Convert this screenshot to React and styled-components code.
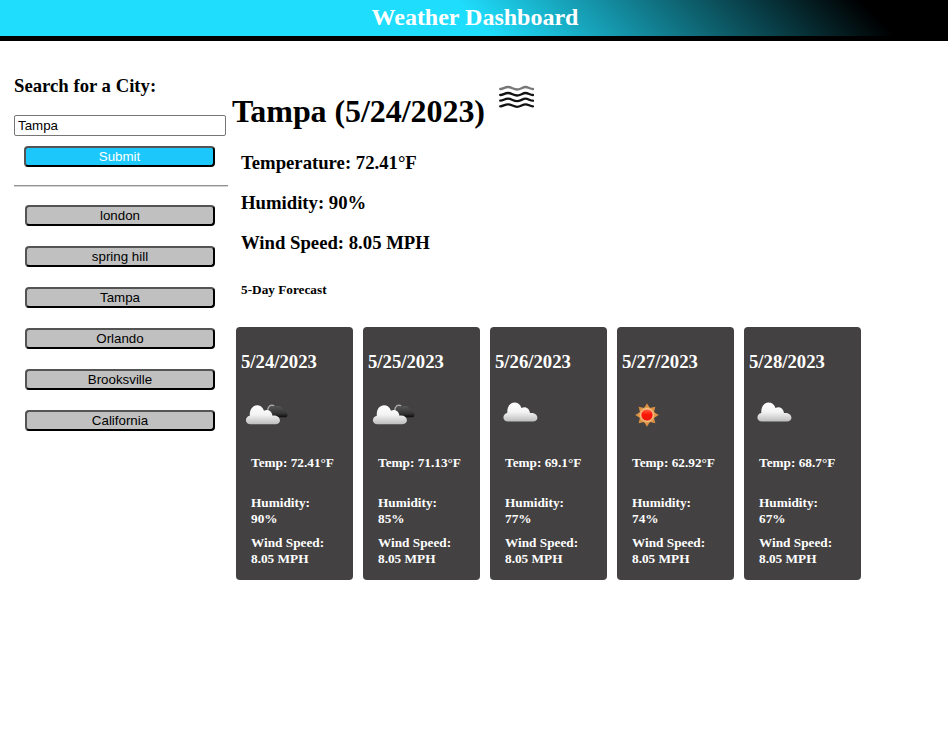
import React from "react";
import styled, { createGlobalStyle } from "styled-components";

const GlobalStyle = createGlobalStyle`
  * { box-sizing: border-box; }
  body { margin: 0; background: #fff; color: #000; font-family: "Liberation Serif", "Times New Roman", serif; }
  h1, h2, h3, h4, h5, p { margin: 0; }
`;

const Header = styled.header`
  height: 41px;
  border-bottom: 5px solid #000;
  background: linear-gradient(45deg, #1fddfc 50%, #000 91%) padding-box;
  padding-left: 2px;
  text-align: center;
`;
const Brand = styled.h1`
  color: #fff;
  font-size: 24px;
  line-height: 34px;
`;
const Layout = styled.main`
  display: flex;
  align-items: flex-start;
`;
const Sidebar = styled.aside`
  width: 228px;
  flex: none;
  padding: 34px 0 0 14px;
`;
const SearchTitle = styled.h2`
  font-size: 18.72px;
  line-height: 21px;
`;
const SearchInput = styled.input`
  display: block;
  width: 212px;
  height: 21px;
  margin-top: 19px;
  padding: 1px 3px;
  border: 1px solid #767676;
  border-radius: 2px;
  outline: none;
  color: #000;
  background: #fff;
  font: 13.333px "Liberation Sans", Arial, sans-serif;
`;
const Button = styled.button`
  display: block;
  height: 21px;
  padding: 0;
  border: 2px outset #000;
  border-radius: 4px;
  text-align: center;
  font: 13.333px/17px "Liberation Sans", Arial, sans-serif;
`;
const SubmitButton = styled(Button)`
  width: 191px;
  margin: 10px 0 0 10px;
  color: #fff;
  background: #1cc7fb;
`;
const CityButton = styled(Button)`
  width: 190px;
  color: #000;
  background: #c0c0c0;
`;
const Divider = styled.hr`
  height: 2px;
  margin: 18px 0 0;
  border: solid;
  border-width: 1px 0;
  border-color: #929292 #d4d4d4 #d4d4d4 #929292;
`;
const CityList = styled.div`
  display: flex;
  flex-direction: column;
  gap: 20px;
  padding: 18px 0 0 11px;
`;
const Content = styled.section`
  padding-top: 43px;
`;
const CityHeading = styled.div`
  display: flex;
  align-items: flex-start;
  gap: 14px;
  padding-left: 4px;
`;
const CityName = styled.h2`
  padding-top: 9px;
  font-size: 32px;
  line-height: 36px;
  letter-spacing: -0.06px;
`;
const FogIcon = styled.svg`
  width: 35px;
  height: 24px;
`;
const Conditions = styled.div`
  display: grid;
  gap: 19px;
  padding: 23px 0 0 13px;
`;
const Condition = styled.p`
  font-size: 18.72px;
  font-weight: bold;
  line-height: 21px;
`;
const ForecastTitle = styled.h5`
  margin: 29px 0 0 13px;
  font-size: 13.28px;
  line-height: 15px;
`;
const Forecast = styled.div`
  display: flex;
  gap: 10px;
  padding: 30px 0 0 8px;
`;
const Card = styled.article`
  width: 117px;
  height: 253px;
  padding: 24px 5px 0;
  border-radius: 4px;
  background: #434141;
  color: #fff;
`;
const CardDate = styled.h3`
  font-size: 18.72px;
  line-height: 21px;
`;
const CardIcon = styled.svg`
  display: block;
  width: 50px;
  height: 50px;
  margin-top: 16px;
`;
const Reading = styled.p`
  width: 92px;
  margin: ${({ $top }) => $top}px 0 0 10px;
  font-size: 13.28px;
  font-weight: bold;
  line-height: 16px;
`;

const waves = [4.3, 10.3, 16, 21.6];
function Fog() {
  return (
    <FogIcon viewBox="0 0 35 24" fill="none">
      {waves.map((y, i) => (
        <path
          key={y}
          d={`M1.2 ${y + 0.7}C4 ${y + 0.9} 5.5 ${y - 1.3} 9 ${y - 1.3}S14.5 ${y + 1.2} 18 ${y + 1.2}S23.5 ${y - 1.3} 26.5 ${y - 1.3}S31 ${y + 0.8} 34 ${y + 0.7}`}
          stroke={i === 0 ? "#777" : "#111"}
          strokeWidth="2.3"
          strokeLinecap="round"
        />
      ))}
    </FogIcon>
  );
}

const rays = Array.from({ length: 8 }, (_, i) => i * 45);
const cloudShape =
  "M13 33.5C7 33.5 7 26 12.3 25C11.5 13 23.5 11.5 26.5 20C30.5 17.8 34.5 20.5 35 25C43.5 23.7 45 33.5 38 33.5Z";

function WeatherIcon({ kind, id }) {
  const white = `white-${id}`;
  const dark = `dark-${id}`;
  const red = `red-${id}`;
  if (kind === "sun") {
    return (
      <CardIcon viewBox="0 0 50 50">
        <defs>
          <linearGradient id={red} x1="0" y1="0" x2="0" y2="1">
            <stop stopColor="#ff7045" />
            <stop offset=".45" stopColor="#ff1608" />
            <stop offset="1" stopColor="#e51b08" />
          </linearGradient>
        </defs>
        {rays.map((angle) => (
          <path key={angle} d="M21.5 21L25 15.2L28.5 21Z" fill="#db9043" transform={`rotate(${angle} 25 27)`} />
        ))}
        <circle cx="25" cy="27" r="7.8" fill="#e4a453" />
        <circle cx="25" cy="27" r="6.2" fill={`url(#${red})`} stroke="#ffe0b0" strokeWidth=".9" />
      </CardIcon>
    );
  }
  return (
    <CardIcon viewBox="0 0 50 50">
      <defs>
        <linearGradient id={white} x1="0" y1="0" x2="0" y2="1">
          <stop stopColor="#fff" />
          <stop offset=".5" stopColor="#f3f3f3" />
          <stop offset="1" stopColor="#bdbdbd" />
        </linearGradient>
        <linearGradient id={dark} x1="0" y1="0" x2="0" y2="1">
          <stop stopColor="#5a5a5a" />
          <stop offset=".7" stopColor="#333" />
          <stop offset="1" stopColor="#0c0c0c" />
        </linearGradient>
      </defs>
      {kind === "clouds" && (
        <>
          <path d="M26.5 24C26 17 30.5 15.5 33.5 18.8C37 16.8 40.5 18 41.5 21C44.5 20.7 44.8 23 44.5 24.2C47.5 25 47 29.3 44 29.3H28Z" fill={`url(#${dark})`} />
          <path d="M26.7 23C26.7 18.5 29.5 15.8 33.3 17.8" fill="none" stroke="#b0b0b0" strokeWidth="1.2" />
        </>
      )}
      <path
        transform={kind === "clouds" ? "translate(-3.5 2.7)" : undefined}
        d={cloudShape}
        fill={`url(#${white})`}
      />
    </CardIcon>
  );
}

const cities = ["london", "spring hill", "Tampa", "Orlando", "Brooksville", "California"];
const forecast = [
  { date: "5/24/2023", icon: "clouds", temp: "72.41", humidity: 90 },
  { date: "5/25/2023", icon: "clouds", temp: "71.13", humidity: 85 },
  { date: "5/26/2023", icon: "cloud", temp: "69.1", humidity: 77 },
  { date: "5/27/2023", icon: "sun", temp: "62.92", humidity: 74 },
  { date: "5/28/2023", icon: "cloud", temp: "68.7", humidity: 67 },
];

export default function App() {
  return (
    <>
      <GlobalStyle />
      <Header><Brand>Weather Dashboard</Brand></Header>
      <Layout>
        <Sidebar>
          <SearchTitle>Search for a City:</SearchTitle>
          <SearchInput defaultValue="Tampa" aria-label="City" />
          <SubmitButton>Submit</SubmitButton>
          <Divider />
          <CityList>
            {cities.map((city) => <CityButton key={city}>{city}</CityButton>)}
          </CityList>
        </Sidebar>
        <Content>
          <CityHeading>
            <CityName>Tampa (5/24/2023)</CityName>
            <Fog />
          </CityHeading>
          <Conditions>
            <Condition>Temperature: 72.41°F</Condition>
            <Condition>Humidity: 90%</Condition>
            <Condition>Wind Speed: 8.05 MPH</Condition>
          </Conditions>
          <ForecastTitle>5-Day Forecast</ForecastTitle>
          <Forecast>
            {forecast.map((day, i) => (
              <Card key={day.date}>
                <CardDate>{day.date}</CardDate>
                <WeatherIcon kind={day.icon} id={i} />
                <Reading $top={17}>Temp: {day.temp}°F</Reading>
                <Reading $top={24}>Humidity:<br />{day.humidity}%</Reading>
                <Reading $top={8}>Wind Speed:<br />8.05 MPH</Reading>
              </Card>
            ))}
          </Forecast>
        </Content>
      </Layout>
    </>
  );
}
